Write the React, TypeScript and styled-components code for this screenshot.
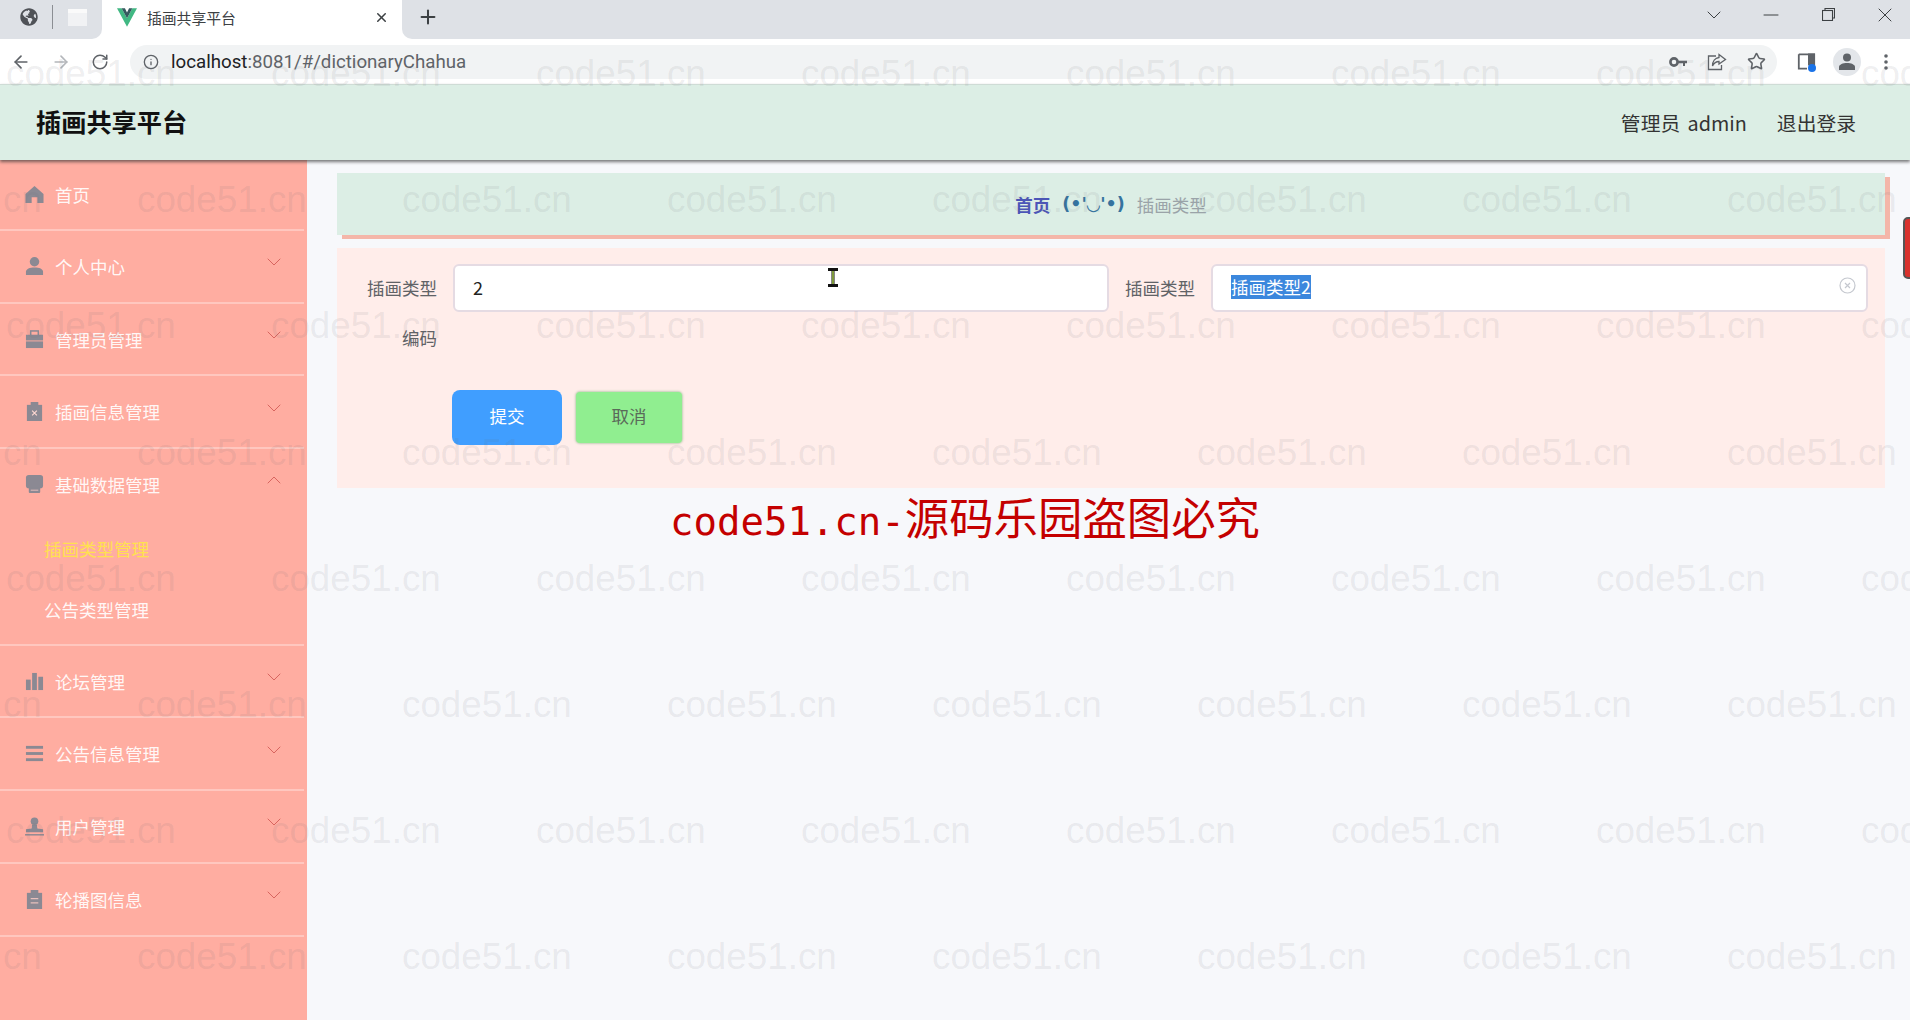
import React from "react";
import styled, { createGlobalStyle } from "styled-components";
import { ArrowLeft, ArrowRight, RotateCw, Info, Star, X, Plus, ChevronDown, ChevronUp, Minus } from "lucide-react";
import { FaGlobeAmericas } from "react-icons/fa";

const CJK = `"Noto Sans CJK SC", "Liberation Sans", sans-serif`;

const Global = createGlobalStyle`
  html, body { margin: 0; padding: 0; height: 100%; overflow: hidden; background: #f7f8fb; }
  * { box-sizing: border-box; }
  body { font-family: ${CJK}; }
`;

const Page = styled.div`
  position: relative;
  width: 1910px;
  height: 1020px;
  overflow: hidden;
  display: flex;
  flex-direction: column;
`;

const TabStrip = styled.div`
  height: 39px;
  display: flex;
  background: #fff;
  flex: none;
`;
const LeftTabs = styled.div`
  width: 102px;
  background: #dee1e6;
  border-radius: 0 0 10px 0;
  display: flex;
  align-items: center;
  padding: 0 0 5px 20px;
  color: #4f5257;
`;
const TabDivider = styled.span`
  width: 1px;
  height: 24px;
  background: #8b8e93;
  margin: 0 15px 0 14px;
`;
const MiniWindow = styled.span`
  width: 19px;
  height: 17px;
  background: #f1f2f4;
  border-top: 4px solid #fafafa;
`;
const ActiveTab = styled.div`
  width: 300px;
  display: flex;
  align-items: center;
  padding: 0 13px 4px 15px;
  color: #3c4043;
  font-size: 14.8px;
`;
const TabTitle = styled.span`
  margin-left: 10px;
  flex: 1;
`;
const RightStrip = styled.div`
  flex: 1;
  background: #dee1e6;
  border-radius: 0 0 0 10px;
  display: flex;
  align-items: center;
  padding: 0 13px 5px 15px;
  color: #3c4043;
`;
const StripSpacer = styled.div`
  flex: 1;
`;
const WindowButtons = styled.div`
  display: flex;
  align-items: center;
  gap: 33px;
  color: #3c4043;
  margin-bottom: 5px;
`;
const RestoreBox = styled.span`
  width: 24px;
  display: flex;
  justify-content: center;
`;
const Toolbar = styled.div`
  height: 45px;
  flex: none;
  background: #fff;
  display: flex;
  align-items: center;
  padding: 0 10px 0 11px;
  color: #5f6368;
`;
const NavGroup = styled.div`
  display: flex;
  align-items: center;
  gap: 20px;
  width: 119px;
`;
const Faded = styled.span`
  display: flex;
  color: #b4b7bb;
`;
const UrlBar = styled.div`
  width: 1647px;
  height: 34px;
  border-radius: 17px;
  background: #f1f3f4;
  display: flex;
  align-items: center;
  padding: 0 11px 0 13px;
`;
const UrlText = styled.div`
  margin-left: 12px;
  font-family: Roboto, "Liberation Sans", sans-serif;
  font-size: 18.7px;
  color: #5f6368;
  flex: 1;
`;
const Host = styled.span`
  color: #202124;
`;
const UrlActions = styled.div`
  display: flex;
  align-items: center;
  gap: 20px;
`;
const ToolActions = styled.div`
  display: flex;
  align-items: center;
  margin-left: 20px;
`;
const Avatar = styled.span`
  width: 28px;
  height: 28px;
  margin: 0 23px 0 16px;
  border-radius: 50%;
  background: #e3e6ea;
  display: flex;
  align-items: center;
  justify-content: center;
`;

const Header = styled.header`
  position: relative;
  z-index: 2;
  height: 76px;
  flex: none;
  background: #dceee5;
  border-top: 1px solid #cfdcd6;
  box-shadow: 0 2px 3px rgba(50, 50, 50, 0.65);
  display: flex;
  align-items: center;
  padding: 0 54px 0 36px;
`;
const Brand = styled.h1`
  margin: 0 0 3px;
  flex: 1;
  font-size: 25.2px;
  font-weight: 700;
  color: #111;
`;
const HeaderLink = styled.span`
  font-size: 19.8px;
  color: #333;
  margin: 0 0 1px 30px;
  word-spacing: 3px;
`;

const Body = styled.div`
  flex: 1;
  display: flex;
  min-height: 0;
`;
const Sidebar = styled.aside`
  width: 307px;
  flex: none;
  background: #ffada1;
  box-shadow: 1px 0 2px rgba(200, 200, 200, 0.25);
`;
const Menu = styled.nav`
  width: 304px;
`;
const MenuGroup = styled.div<{ $first?: boolean }>`
  border-bottom: 2px solid rgba(255, 255, 255, 0.32);
  height: ${(p) => (p.$first ? "71px" : "auto")};
`;
const MenuHead = styled.div<{ $first?: boolean }>`
  height: ${(p) => (p.$first ? "69px" : "70.7px")};
  display: flex;
  align-items: center;
  padding: 0 18px 0 25px;
  color: rgba(255, 255, 255, 0.92);
  font-size: 17.5px;
`;
const MenuIcon = styled.svg`
  width: 19px;
  height: 19px;
  margin-right: 11px;
  flex: none;
  color: #8b8993;
`;
const MenuText = styled.span`
  flex: 1;
`;
const Caret = styled.span`
  display: flex;
  color: #d8655f;
  margin-top: -8px;
`;
const SubMenu = styled.div`
  height: 124px;
`;
const SubItem = styled.div<{ $active?: boolean }>`
  height: 61px;
  display: flex;
  align-items: center;
  padding: 0 0 3px 44px;
  font-size: 17.5px;
  color: ${(p) => (p.$active ? "#ffe14f" : "rgba(255,255,255,0.92)")};
`;

const Main = styled.main`
  flex: 1;
  padding: 13px 25px 0 30px;
  background: #f7f8fb;
`;
const Crumbs = styled.div`
  height: 62px;
  background: #dceee5;
  box-shadow: 5px 4px 0 #f4b6a9;
  display: flex;
  align-items: center;
  justify-content: center;
  font-size: 17.5px;
`;
const CrumbHome = styled.span`
  font-weight: 700;
  color: #4b55b8;
`;
const CrumbFace = styled.span`
  margin: 0 12px;
  font-weight: 700;
  color: #35739f;
  font-family: "DejaVu Sans", ${CJK};
  font-size: 17.5px;
`;
const CrumbPage = styled.span`
  color: #9aa3a8;
`;
const FormCard = styled.form`
  margin-top: 13px;
  height: 240px;
  background: #ffedea;
  padding-top: 16px;
`;
const FieldGrid = styled.div`
  display: grid;
  grid-template-columns: 100px 656px 70px 657px;
  column-gap: 16px;
  grid-auto-rows: auto;
`;
const FieldLabel = styled.label`
  height: 48px;
  display: flex;
  align-items: center;
  justify-content: flex-end;
  padding-bottom: 2px;
  font-size: 17.5px;
  color: #606266;
`;
const CodeLabel = styled(FieldLabel)`
  grid-column: 1;
  height: 52px;
`;
const FieldBox = styled.div`
  position: relative;
  height: 48px;
  background: #fff;
  border: 2px solid #e5dbe3;
  border-radius: 6px;
  display: flex;
  align-items: center;
  padding: 0 18px 3px;
  font-size: 18px;
  color: #222;
`;
const Selected = styled.span`
  background: #3b87dd;
  color: #fff;
  font-size: 17.5px;
  line-height: 24px;
`;
const ClearIcon = styled.svg`
  position: absolute;
  right: 10px;
  top: 11px;
  width: 17px;
  height: 17px;
  color: #c5c8cf;
`;
const Actions = styled.div`
  display: flex;
  align-items: center;
  padding-left: 115px;
  margin-top: 26px;
  gap: 14px;
`;
const SubmitButton = styled.button`
  width: 110px;
  height: 55px;
  padding-bottom: 5px;
  border: 0;
  border-radius: 8px;
  background: #409eff;
  color: #fff;
  font: 17.5px ${CJK};
`;
const CancelButton = styled.button`
  width: 106px;
  height: 51px;
  padding-bottom: 5px;
  border: 0;
  border-radius: 4px;
  background: #90ee90;
  box-shadow: 0 0 2px 1px rgba(120, 170, 120, 0.45);
  color: #5a6a5a;
  font: 17.5px ${CJK};
`;
const Notice = styled.div`
  margin: 0 0 0 333px;
  color: #c40000;
  font-size: 44.4px;
  line-height: 56px;
  white-space: nowrap;
`;
const NoticeLatin = styled.span`
  font-family: "DejaVu Sans Mono", monospace;
  font-size: 39px;
`;

const Watermarks = styled.div`
  position: absolute;
  inset: 0;
  z-index: 5;
  padding-top: 11px;
  overflow: hidden;
  pointer-events: none;
`;
const WatermarkRow = styled.div<{ $shift: number }>`
  display: flex;
  height: 126.2px;
  margin-left: ${(p) => p.$shift}px;
`;
const WatermarkText = styled.span`
  flex: 0 0 265px;
  font-family: "Liberation Sans", sans-serif;
  font-size: 36.8px;
  line-height: 125px;
  color: rgba(105, 105, 115, 0.115);
`;
const TextCursor = styled.svg`
  position: absolute;
  left: 826px;
  top: 268px;
  width: 14px;
  height: 19px;
  z-index: 6;
`;
const ScrollSliver = styled.div`
  position: absolute;
  right: -8px;
  top: 217px;
  width: 15px;
  height: 62px;
  background: #d9322d;
  border: 2px solid #555;
  border-radius: 5px;
  z-index: 6;
`;

type IconName = "home" | "user" | "case" | "release" | "platform" | "data" | "operation" | "stamp" | "order";

const glyphs: Record<IconName, React.ReactNode> = {
  home: <path d="M10 1 L19.5 9.5 V19 H13 V13 H7 V19 H.5 V9.5 Z" fill="currentColor" />,
  user: (
    <>
      <circle cx="10" cy="5" r="5" fill="currentColor" />
      <path d="M1 19 V15.5 C1 12.5 5 11 10 11 S19 12.5 19 15.5 V19 Z" fill="currentColor" />
    </>
  ),
  case: (
    <>
      <rect x="6" y="1" width="8" height="5" fill="none" stroke="currentColor" strokeWidth="1.6" />
      <rect x="1" y="5" width="18" height="6" fill="currentColor" />
      <rect x="1" y="12" width="18" height="7" fill="currentColor" />
    </>
  ),
  release: (
    <>
      <rect x="2" y="3" width="16" height="17" fill="currentColor" />
      <rect x="6" y="0" width="8" height="4" fill="currentColor" />
      <path d="M7.5 9 L12.5 14 M12.5 9 L7.5 14" stroke="#ffd9d2" strokeWidth="1.2" />
    </>
  ),
  platform: (
    <>
      <rect x="1" y="0" width="18" height="14" rx="3" fill="currentColor" />
      <rect x="4" y="13" width="12" height="6" rx="1" fill="currentColor" />
      <path d="M6 16 H14" stroke="#e8c0bc" strokeWidth="1" />
    </>
  ),
  data: (
    <>
      <rect x="1" y="8" width="5" height="11" fill="currentColor" />
      <rect x="7.5" y="1" width="5" height="18" fill="currentColor" />
      <rect x="14" y="5" width="5" height="14" fill="currentColor" />
    </>
  ),
  operation: (
    <>
      <rect x="1" y="2" width="18" height="3" fill="currentColor" />
      <rect x="1" y="8.5" width="18" height="3" fill="currentColor" />
      <rect x="1" y="15" width="18" height="3" fill="currentColor" />
    </>
  ),
  stamp: (
    <>
      <circle cx="10" cy="4.5" r="4" fill="currentColor" />
      <path d="M7.5 8 H12.5 L13 12 L19 13 V16 H1 V13 L7 12 Z" fill="currentColor" />
      <rect x="0" y="18" width="20" height="1.5" fill="currentColor" />
    </>
  ),
  order: (
    <>
      <rect x="2" y="3" width="16" height="17" fill="currentColor" />
      <rect x="6" y="0" width="8" height="4" fill="currentColor" />
      <path d="M6 9 H14 M6 13.5 H14" stroke="#e8c0bc" strokeWidth="1.3" />
    </>
  ),
};

const SideIcon = ({ name }: { name: IconName }) => <MenuIcon viewBox="0 0 20 20">{glyphs[name]}</MenuIcon>;

const menu: { icon: IconName; label: string; caret?: boolean; open?: boolean }[] = [
  { icon: "home", label: "首页" },
  { icon: "user", label: "个人中心", caret: true },
  { icon: "case", label: "管理员管理", caret: true },
  { icon: "release", label: "插画信息管理", caret: true },
  { icon: "platform", label: "基础数据管理", caret: true, open: true },
  { icon: "data", label: "论坛管理", caret: true },
  { icon: "operation", label: "公告信息管理", caret: true },
  { icon: "stamp", label: "用户管理", caret: true },
  { icon: "order", label: "轮播图信息", caret: true },
];

const VueLogo = () => (
  <svg width="20" height="19" viewBox="0 0 24 22">
    <path d="M0 0 L12 22 L24 0 H18.5 L12 12 L5.5 0 Z" fill="#41b883" />
    <path d="M5.5 0 L12 12 L18.5 0 H14.5 L12 5 L9.5 0 Z" fill="#35595e" />
  </svg>
);
const KeyIcon = () => (
  <svg width="18" height="12" viewBox="0 0 18 12">
    <circle cx="5" cy="6" r="3.6" fill="none" stroke="#5f6368" strokeWidth="2.6" />
    <path d="M9 4.8 H18 V7.2 H16 V10 H14 V7.2 H9 Z" fill="#5f6368" />
  </svg>
);
const ShareIcon = () => (
  <svg width="20" height="18" viewBox="0 0 20 18" fill="none" stroke="#5f6368" strokeWidth="1.3">
    <path d="M9 3 H1.5 V16.5 H14.5 V12" />
    <path d="M12 1.5 L18.5 6.5 L12 11 V8.5 C9 8.5 7 10 5.5 13 C5.5 8.5 8 5 12 4.5 Z" />
  </svg>
);
const PanelIcon = () => (
  <svg width="20" height="20" viewBox="0 0 20 20">
    <path d="M1.8 2.3 H17.2 V13 M10 16.7 H1.8 V2.3" fill="none" stroke="#5f6368" strokeWidth="1.8" />
    <rect x="11" y="1.5" width="7" height="12" fill="#5f6368" />
    <circle cx="15" cy="16" r="4" fill="#1a73e8" />
  </svg>
);
const ProfileIcon = () => (
  <svg width="16" height="17" viewBox="0 0 16 17" fill="#5f6368">
    <circle cx="8" cy="4.5" r="4" />
    <path d="M0 17 V14 C0 11.5 4 10 8 10 S16 11.5 16 14 V17 Z" />
  </svg>
);
const DotsIcon = () => (
  <svg width="4" height="16" viewBox="0 0 4 16" fill="#5f6368">
    <circle cx="2" cy="2" r="1.8" />
    <circle cx="2" cy="8" r="1.8" />
    <circle cx="2" cy="14" r="1.8" />
  </svg>
);
const RestoreIcon = () => (
  <svg width="13" height="13" viewBox="0 0 13 13" fill="none" stroke="#3c4043" strokeWidth="1.1">
    <rect x="0.5" y="2.5" width="10" height="10" />
    <path d="M3 2.5 V0.5 H12.5 V10 H10.5" />
  </svg>
);

const rows = [6, -128, 6, -128, 6, -128, 6, -128];

export default function App() {
  return (
    <Page>
      <Global />
      <TabStrip>
        <LeftTabs>
          <FaGlobeAmericas size={18} />
          <TabDivider />
          <MiniWindow />
        </LeftTabs>
        <ActiveTab>
          <VueLogo />
          <TabTitle>插画共享平台</TabTitle>
          <X size={15} color="#3c4043" strokeWidth={2.4} />
        </ActiveTab>
        <RightStrip>
          <Plus size={22} strokeWidth={2.2} />
          <StripSpacer />
          <WindowButtons>
            <ChevronDown size={24} strokeWidth={1} />
            <Minus size={24} strokeWidth={1} />
            <RestoreBox>
              <RestoreIcon />
            </RestoreBox>
            <X size={24} strokeWidth={1} />
          </WindowButtons>
        </RightStrip>
      </TabStrip>
      <Toolbar>
        <NavGroup>
          <ArrowLeft size={20} />
          <Faded>
            <ArrowRight size={20} />
          </Faded>
          <RotateCw size={18} />
        </NavGroup>
        <UrlBar>
          <Info size={16} />
          <UrlText>
            <Host>localhost</Host>:8081/#/dictionaryChahua
          </UrlText>
          <UrlActions>
            <KeyIcon />
            <ShareIcon />
            <Star size={19} />
          </UrlActions>
        </UrlBar>
        <ToolActions>
          <PanelIcon />
          <Avatar>
            <ProfileIcon />
          </Avatar>
          <DotsIcon />
        </ToolActions>
      </Toolbar>
      <Header>
        <Brand>插画共享平台</Brand>
        <HeaderLink>管理员 admin</HeaderLink>
        <HeaderLink>退出登录</HeaderLink>
      </Header>
      <Body>
        <Sidebar>
          <Menu>
            {menu.map((m, i) => (
              <MenuGroup key={m.label} $first={i === 0}>
                <MenuHead $first={i === 0}>
                  <SideIcon name={m.icon} />
                  <MenuText>{m.label}</MenuText>
                  {m.caret && <Caret>{m.open ? <ChevronUp size={24} strokeWidth={1} /> : <ChevronDown size={24} strokeWidth={1} />}</Caret>}
                </MenuHead>
                {m.open && (
                  <SubMenu>
                    <SubItem $active>插画类型管理</SubItem>
                    <SubItem>公告类型管理</SubItem>
                  </SubMenu>
                )}
              </MenuGroup>
            ))}
          </Menu>
        </Sidebar>
        <Main>
          <Crumbs>
            <CrumbHome>首页</CrumbHome>
            <CrumbFace>(•'◡'•)</CrumbFace>
            <CrumbPage>插画类型</CrumbPage>
          </Crumbs>
          <FormCard>
            <FieldGrid>
              <FieldLabel>插画类型</FieldLabel>
              <FieldBox>2</FieldBox>
              <FieldLabel>插画类型</FieldLabel>
              <FieldBox>
                <Selected>插画类型2</Selected>
                <ClearIcon viewBox="0 0 17 17" fill="none" stroke="currentColor" strokeWidth="1.2">
                  <circle cx="8.5" cy="8.5" r="7.5" />
                  <path d="M6 6 L11 11 M11 6 L6 11" />
                </ClearIcon>
              </FieldBox>
              <CodeLabel>编码</CodeLabel>
            </FieldGrid>
            <Actions>
              <SubmitButton type="button">提交</SubmitButton>
              <CancelButton type="button">取消</CancelButton>
            </Actions>
          </FormCard>
          <Notice>
            <NoticeLatin>code51.cn-</NoticeLatin>源码乐园盗图必究
          </Notice>
        </Main>
      </Body>
      <Watermarks>
        {rows.map((shift, r) => (
          <WatermarkRow key={r} $shift={shift}>
            {Array.from({ length: 8 }).map((_, c) => (
              <WatermarkText key={c}>code51.cn</WatermarkText>
            ))}
          </WatermarkRow>
        ))}
      </Watermarks>
      <TextCursor viewBox="0 0 14 19">
        <path d="M2 1.5 H12 M2 17.5 H12 M7 1.5 V17.5" stroke="#111" strokeWidth="3" />
        <path d="M7 3 V16" stroke="#7f9a3c" strokeWidth="2" />
      </TextCursor>
      <ScrollSliver />
    </Page>
  );
}
